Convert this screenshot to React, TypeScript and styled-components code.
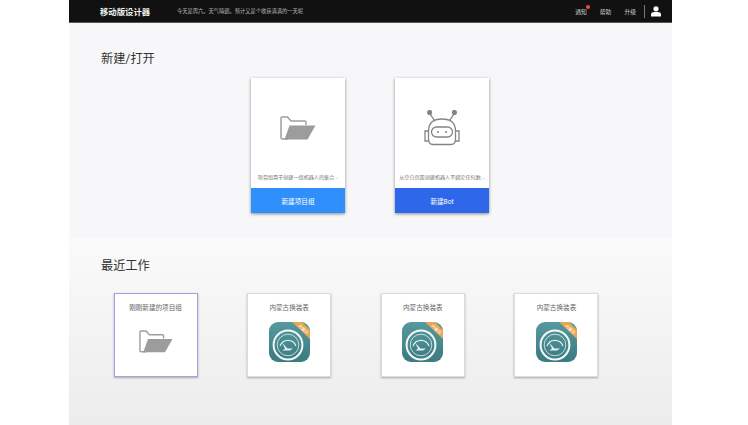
import React from 'react';
import styled, { createGlobalStyle } from 'styled-components';

const GlobalStyle = createGlobalStyle`
    html, body {
        margin: 0;
        padding: 0;
        background: #ffffff;
        font-family: Roboto, "Noto Sans CJK SC", sans-serif;
    }
`;

const Page = styled.div`
    width: 603px;
    height: 425px;
    margin-left: 69px;
    display: flex;
    flex-direction: column;
    overflow: hidden;
`;

const Header = styled.header`
    height: 23px;
    flex: none;
    background: #111111;
    border-bottom: 1px solid #555;
    box-sizing: border-box;
    display: flex;
    align-items: center;
    padding: 0 11px 0 31px;
`;

const Brand = styled.div`
    width: 77px;
    font-size: 8.4px;
    font-weight: 700;
    color: #f2f2f2;
`;

const Tagline = styled.div`
    flex: 1;
    font-size: 5.25px;
    color: #b5b5b5;
`;

const NavItem = styled.div<{ $dot?: boolean }>`
    position: relative;
    margin-left: 13px;
    font-size: 5.8px;
    color: #c9c9c9;

    ${({ $dot }) =>
        $dot &&
        `
        &::after {
            content: '';
            position: absolute;
            top: -2px;
            right: -3px;
            width: 4px;
            height: 4px;
            border-radius: 50%;
            background: #f04a4a;
        }
    `}
`;

const NavDivider = styled.div`
    width: 1px;
    height: 13px;
    background: #777;
    margin: 0 6px 0 8px;
`;

const TopSection = styled.section`
    height: 215px;
    flex: none;
    background: #f7f7f9;
    padding: 28px 32px 0;
    box-sizing: border-box;
`;

const RecentSection = styled.section`
    flex: 1;
    background: linear-gradient(#fafafa, #ececec);
    padding: 20px 32px 0;
    box-sizing: border-box;
`;

const SectionTitle = styled.h2`
    margin: 0;
    height: 16px;
    line-height: 16px;
    font-size: 12.2px;
    font-weight: 400;
    color: #333;
`;

const CreateRow = styled.div`
    display: flex;
    justify-content: center;
    gap: 50px;
    margin: 11px 0 0 -1px;
`;

const CreateCard = styled.div`
    width: 94px;
    height: 135px;
    background: #fff;
    box-shadow: 0 1px 3px rgba(0, 0, 0, 0.45);
    display: flex;
    flex-direction: column;
`;

const CreateBody = styled.div`
    flex: 1;
    display: flex;
    flex-direction: column;
    align-items: center;
    padding-top: 33px;
`;

const IconSlot = styled.div`
    height: 34px;
    display: flex;
    align-items: center;
    justify-content: center;
`;

const Description = styled.div`
    margin-top: 28px;
    font-size: 5.1px;
    color: #777;
    white-space: nowrap;
`;

const CreateButton = styled.div<{ $color: string }>`
    height: 25px;
    background: ${({ $color }) => $color};
    color: #fff;
    font-size: 6.6px;
    display: flex;
    align-items: center;
    justify-content: center;
`;

const RecentRow = styled.div`
    display: flex;
    gap: 49.67px;
    margin: 19px 0 0 12.5px;
`;

const RecentCard = styled.div<{ $active?: boolean }>`
    width: 84px;
    height: 84px;
    box-sizing: border-box;
    background: #fff;
    border: 1px solid ${({ $active }) => ($active ? '#a0a0e6' : '#dcdcdc')};
    box-shadow: 0 1px 2px rgba(0, 0, 0, 0.3);
    display: flex;
    flex-direction: column;
    align-items: center;
    padding-top: 10px;
`;

const RecentName = styled.div`
    font-size: 6.6px;
    line-height: 9px;
    color: #666;
`;

const RecentIcon = styled.div<{ $top: number }>`
    margin-top: ${({ $top }) => $top}px;
    display: flex;
`;

const FolderIcon = ({ width }: { width: number }) => (
    <svg width={width} viewBox="0 0 36 24" style={{ display: 'block' }}>
        <path
            d="M8 23H2.2Q1 23 1 21.8V2.2Q1 1 2.2 1H7.5L11 5H25Q26 5 26 6V9"
            fill="none"
            stroke="#9e9e9e"
            strokeWidth="1.5"
        />
        <path d="M9.5 9.5H35.5L27.5 23.5H4.5Z" fill="#9c9c9c" />
    </svg>
);

const RobotIcon = () => (
    <svg width="36" height="36" viewBox="0 0 36 36" fill="none" stroke="#858585" strokeWidth="1.3">
        <circle cx="5.6" cy="2.4" r="1.9" fill="#858585" />
        <circle cx="30.4" cy="2.4" r="1.9" fill="#858585" />
        <path d="M6.3 4.3L10.5 10.5M29.7 4.3L25.5 10.5" />
        <path d="M4.5 29V21Q4.5 9 18 9T31.5 21V29Q31.5 34.5 27 34.5H9Q4.5 34.5 4.5 29Z" />
        <path d="M4.5 21H1V31H4.5M31.5 21H35V31H31.5" />
        <rect x="7.5" y="17" width="21" height="10" rx="5" />
        <circle cx="14" cy="22" r="1" fill="#858585" stroke="none" />
        <circle cx="22" cy="22" r="1" fill="#858585" stroke="none" />
    </svg>
);

const GaugeIcon = ({ id }: { id: string }) => (
    <svg width="41" height="40" viewBox="0 0 41 40" style={{ display: 'block' }}>
        <defs>
            <linearGradient id={id} x1="0" y1="0" x2="0" y2="1">
                <stop offset="0" stopColor="#559a9e" />
                <stop offset="1" stopColor="#3a7a80" />
            </linearGradient>
            <clipPath id={`${id}-clip`}>
                <rect width="41" height="40" rx="9" />
            </clipPath>
        </defs>
        <g clipPath={`url(#${id}-clip)`}>
            <rect width="41" height="40" fill={`url(#${id})`} />
            <path d="M23 0H33L41 8V17Z" fill="#eba651" />
        </g>
        <text
            x="33.5"
            y="8.5"
            fontSize="4"
            fill="#fff"
            textAnchor="middle"
            transform="rotate(42 33.5 8.5)"
        >
            内蒙古
        </text>
        <circle cx="19" cy="23" r="14.4" fill="none" stroke="#f4f8f8" strokeWidth="2" />
        <circle cx="19" cy="23" r="10.8" fill="none" stroke="#d5e6e6" strokeWidth="0.9" />
        <path d="M11 24A8.5 8.5 0 0 1 27 24" fill="none" stroke="#e6f0f0" strokeWidth="1.2" />
        <path d="M13 20.5L18.5 26.5H24L21 28.5H13.5L16 26.5Z" fill="#e3eeee" />
    </svg>
);

const recentGauges = ['gauge-a', 'gauge-b', 'gauge-c'];

const App: React.FC = () => (
    <>
        <GlobalStyle />
        <Page>
            <Header>
                <Brand>移动版设计器</Brand>
                <Tagline>今天是周六。天气晴朗。预计又是个收获满满的一天呢</Tagline>
                <NavItem $dot>通知</NavItem>
                <NavItem>帮助</NavItem>
                <NavItem>升级</NavItem>
                <NavDivider />
                <svg width="10" height="11" viewBox="0 0 10 11">
                    <circle cx="5" cy="2.8" r="2.6" fill="#fff" />
                    <path d="M0 10.6V8.5Q0 6 3 6H7Q10 6 10 8.5V10.6Z" fill="#fff" />
                </svg>
            </Header>
            <TopSection>
                <SectionTitle>新建/打开</SectionTitle>
                <CreateRow>
                    <CreateCard>
                        <CreateBody>
                            <IconSlot>
                                <FolderIcon width={36} />
                            </IconSlot>
                            <Description>项目组用于创建一组机器人的集合...</Description>
                        </CreateBody>
                        <CreateButton $color="#2f8ffb">新建项目组</CreateButton>
                    </CreateCard>
                    <CreateCard>
                        <CreateBody>
                            <IconSlot>
                                <RobotIcon />
                            </IconSlot>
                            <Description>从空白页面创建机器人不绑定任何数...</Description>
                        </CreateBody>
                        <CreateButton $color="#2f67ea">新建Bot</CreateButton>
                    </CreateCard>
                </CreateRow>
            </TopSection>
            <RecentSection>
                <SectionTitle>最近工作</SectionTitle>
                <RecentRow>
                    <RecentCard $active>
                        <RecentName>刚刚新建的项目组</RecentName>
                        <RecentIcon $top={17}>
                            <FolderIcon width={34} />
                        </RecentIcon>
                    </RecentCard>
                    {recentGauges.map((id) => (
                        <RecentCard key={id}>
                            <RecentName>内蒙古换装表</RecentName>
                            <RecentIcon $top={9}>
                                <GaugeIcon id={id} />
                            </RecentIcon>
                        </RecentCard>
                    ))}
                </RecentRow>
            </RecentSection>
        </Page>
    </>
);

export default App;
